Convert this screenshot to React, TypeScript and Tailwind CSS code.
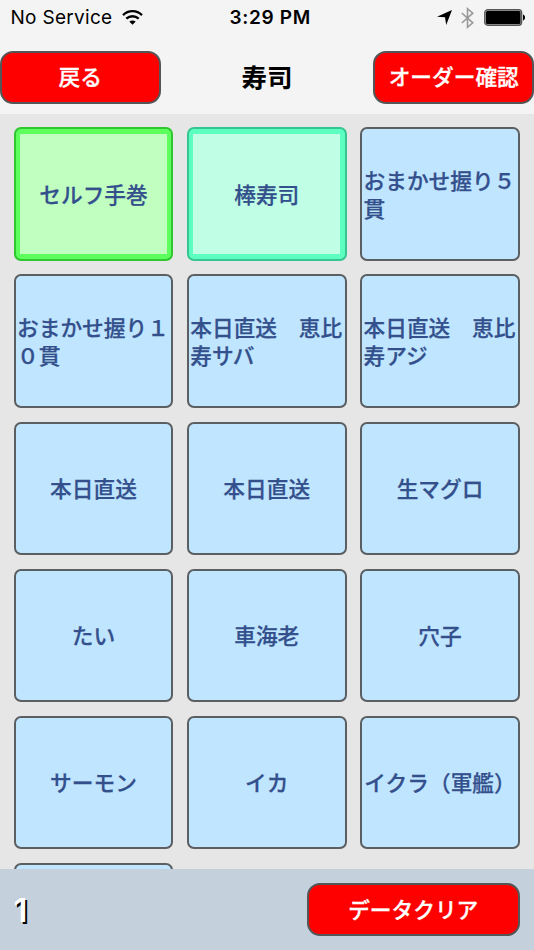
import clsx from "clsx";

type Tone = "green" | "mint" | "blue";

interface MenuItem {
	id: number;
	name: string;
	tone?: Tone;
}

const items: MenuItem[] = [
	{ id: 1, name: "セルフ手巻", tone: "green" },
	{ id: 2, name: "棒寿司", tone: "mint" },
	{ id: 3, name: "おまかせ握り５貫" },
	{ id: 4, name: "おまかせ握り１０貫" },
	{ id: 5, name: "本日直送　恵比寿サバ" },
	{ id: 6, name: "本日直送　恵比寿アジ" },
	{ id: 7, name: "本日直送" },
	{ id: 8, name: "本日直送" },
	{ id: 9, name: "生マグロ" },
	{ id: 10, name: "たい" },
	{ id: 11, name: "車海老" },
	{ id: 12, name: "穴子" },
	{ id: 13, name: "サーモン" },
	{ id: 14, name: "イカ" },
	{ id: 15, name: "イクラ（軍艦）" },
	{ id: 16, name: "" },
];

const tones: Record<Tone, string> = {
	green: "border-[#2fc62f] bg-[#5cff5c]",
	mint: "border-[#35c590] bg-[#5cffc0]",
	blue: "border-[#5c5f62] bg-[#c0e5ff]",
};

const innerTones: Record<Tone, string> = {
	green: "bg-[#c0ffc0]",
	mint: "bg-[#c0ffe5]",
	blue: "",
};

const WifiIcon = () => (
	<svg className="h-[15px] w-[21px]" viewBox="0 0 21 15" fill="none" stroke="#000" strokeWidth="2.3">
		<path d="M1 5.1C6.3-.1 14.7-.1 20 5.1" />
		<path d="M4.3 8.7c3.5-3.3 8.9-3.3 12.4 0" />
		<path d="M10.5 14.7 7.3 11.6c1.8-1.6 4.6-1.6 6.4 0Z" fill="#000" stroke="none" />
	</svg>
);

const LocationIcon = () => (
	<svg className="h-[15px] w-[15px]" viewBox="0 0 15 15">
		<path d="M15 0 9.2 15 8 7.2 0 6.8Z" fill="#000" />
	</svg>
);

const BluetoothIcon = () => (
	<svg className="h-[22px] w-[13px]" viewBox="0 0 13 22" fill="none" stroke="#999" strokeWidth="1.6">
		<path d="m.8 6 11 9.8-5.3 4.5V1.7l5.3 4.5L.8 16" />
	</svg>
);

const BatteryIcon = () => (
	<svg className="h-[17px] w-[41px]" viewBox="0 0 41 17">
		<rect x=".7" y=".7" width="37" height="15.6" rx="3" fill="#999" stroke="#555" strokeWidth="1.2" />
		<rect x="2" y="2" width="34.4" height="13" rx="1.5" fill="#000" />
		<path d="M39 5.5c2.7.7 2.7 5.3 0 6Z" fill="#000" />
	</svg>
);

const StatusBar = () => (
	<div className="grid h-[35px] grid-cols-3 items-center pl-[10.5px] pr-[9px] font-['Inter',sans-serif] text-black">
		<div className="flex items-center gap-[10px]">
			<span className="whitespace-nowrap pt-[2px] text-[19px] tracking-[0.3px]">No Service</span>
			<WifiIcon />
		</div>
		<span className="whitespace-nowrap pl-[5px] pt-[2px] text-center text-[19px] font-semibold tracking-[0.7px]">3:29 PM</span>
		<div className="flex items-center justify-end">
			<LocationIcon />
			<span className="ml-[9px] flex">
				<BluetoothIcon />
			</span>
			<span className="ml-[10px] flex">
				<BatteryIcon />
			</span>
		</div>
	</div>
);

interface RedButtonProps {
	className?: string;
	children: React.ReactNode;
}

const RedButton: React.FC<RedButtonProps> = ({ className, children }) => (
	<button
		className={clsx(
			"flex h-[53px] items-center justify-center whitespace-nowrap rounded-[13px] border-2 border-[#555555] bg-[#ff0000] pb-[2px] text-[21.7px] font-medium leading-none text-white [-webkit-text-stroke:0.3px_#fff]",
			className,
		)}
	>
		{children}
	</button>
);

const MenuCard: React.FC<{ item: MenuItem }> = ({ item }) => {
	const tone = item.tone ?? "blue";
	return (
		<button className={clsx("flex h-[133.4px] rounded-[7px] border-2", tone === "blue" ? "p-0" : "p-[4.5px]", tones[tone])}>
			<span className={clsx("flex h-full w-full items-center justify-center pb-px", tone === "blue" && "px-[1.5px]", innerTones[tone])}>
				<span className="break-all text-left">{item.name}</span>
			</span>
		</button>
	);
};

export default function App() {
	return (
		<div className="flex h-[950px] w-[534px] flex-col overflow-hidden bg-[#e6e6e6] font-['Noto_Sans_CJK_JP',sans-serif]">
			<header className="h-[114px] shrink-0 bg-[#f4f4f4]">
				<StatusBar />
				<div className="mt-[15.5px] flex items-center justify-between">
					<RedButton className="w-[160.5px]">戻る</RedButton>
					<h1 className="pb-[2px] text-[25.5px] font-bold leading-none text-black">寿司</h1>
					<RedButton className="w-[160.5px]">オーダー確認</RedButton>
				</div>
			</header>
			<main className="min-h-0 flex-1 overflow-hidden pl-[13.5px] pr-[14px] pt-[13.4px]">
				<div className="grid grid-cols-3 gap-x-[13.3px] gap-y-[13.7px] text-[21.7px] font-medium leading-[27.7px] text-[#33508c] [-webkit-text-stroke:0.25px_#33508c]">
					{items.map((item) => (
						<MenuCard key={item.id} item={item} />
					))}
				</div>
			</main>
			<footer className="flex h-[81px] shrink-0 items-center justify-between bg-[#c4d0dc] pl-[13.5px] pr-[14px]">
				<span className="pt-[2px] font-['Inter',sans-serif] text-[33px] font-semibold leading-none text-white [text-shadow:2px_2px_0_#000]">1</span>
				<RedButton className="w-[213.5px]">データクリア</RedButton>
			</footer>
		</div>
	);
}
